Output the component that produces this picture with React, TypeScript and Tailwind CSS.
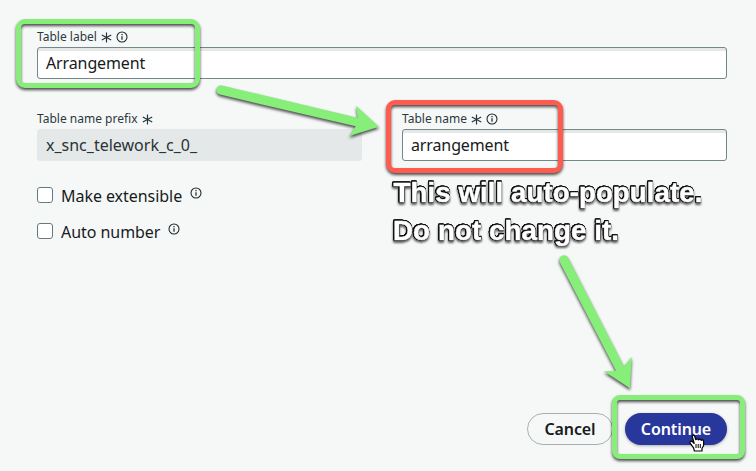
import React from "react";

function Asterisk() {
  return (
    <svg className="h-[11px] w-[11px] shrink-0" viewBox="0 0 11 11" fill="none" stroke="#26343a" strokeWidth="1.15">
      <path d="M5.5 .5v10M.8 3l9.4 5M.8 8l9.4-5" />
    </svg>
  );
}

function Info() {
  return (
    <svg className="h-[12px] w-[12px] shrink-0" viewBox="0 0 12 12" fill="none" stroke="#17242a" strokeWidth="1.05">
      <circle cx="6" cy="6" r="5" />
      <path d="M6 5.2v3.6M6 3v1.2" strokeWidth="1.2" />
    </svg>
  );
}

function Label({ text, info }: { text: string; info?: boolean }) {
  return (
    <div className="flex h-[18px] items-center text-[12px] leading-[18px] text-[#2b393e]">
      <span className="whitespace-nowrap">{text}</span>
      <span className="ml-[4px] flex"><Asterisk /></span>
      {info && <span className="ml-[4.5px] flex"><Info /></span>}
    </div>
  );
}

function Field({ value }: { value: string }) {
  return (
    <div className="mt-px flex h-8 items-center rounded-[3px] border border-[#74878a] bg-white px-2 text-[16px] tracking-[-0.12px] text-[#161b1c] shadow-[inset_0_3px_0_#e4e8e7]">
      {value}
    </div>
  );
}

function Check({ text }: { text: string }) {
  return (
    <div className="flex h-9 items-center text-[16px] leading-6 tracking-[-0.05px] text-[#161b1c]">
      <span className="h-4 w-4 rounded-[3px] border border-[#667a7e] bg-white" />
      <span className="ml-2 pt-px">{text}</span>
      <span className="mb-[5px] ml-[7.5px] flex"><Info /></span>
    </div>
  );
}

const glow = "drop-shadow-[0_2px_1.5px_rgba(0,0,0,0.7)]";

export default function App() {
  return (
    <div className="relative flex h-[471px] w-[756px] flex-col overflow-hidden bg-[#f6f8f8] pt-[28px] pr-[29px] pl-[37px] font-['Noto_Sans',sans-serif]">
      <Label text="Table label" info />
      <Field value="Arrangement" />
      <div className="mt-[31px] grid grid-cols-2 gap-10">
        <div>
          <Label text="Table name prefix" />
          <div className="mt-px flex h-8 items-center rounded-[3px] bg-[#e4e8e9] px-[9px] text-[16px] text-[#2a3234]">x_snc_telework_c_0_</div>
        </div>
        <div>
          <Label text="Table name" info />
          <Field value="arrangement" />
        </div>
      </div>
      <div className="mt-[16px] flex flex-col">
        <Check text="Make extensible" />
        <Check text="Auto number" />
      </div>
      <div className="mt-auto mb-[26px] flex justify-end gap-[12px] text-[16px] font-semibold tracking-[-0.1px]">
        <button className="h-8 w-[86px] rounded-full border border-[#a7b0b1] text-[#161b1c]">Cancel</button>
        <button className="h-8 w-[102px] rounded-full bg-[#27379c] text-white shadow-[0_1px_3px_rgba(0,0,0,0.3)]">Continue</button>
      </div>

      <div className={`absolute top-[19px] left-[16px] h-[69px] w-[184px] rounded-[9px] border-[5px] border-[#86ee79] ${glow}`} />
      <div className={`absolute top-[100px] left-[386px] h-[73px] w-[177px] rounded-[9px] border-[5px] border-[#ff5b4e] ${glow}`} />
      <div className={`absolute top-[395px] left-[612px] h-[64px] w-[133px] rounded-[8px] border-[5px] border-[#86ee79] ${glow}`} />

      <svg className="absolute inset-0" width="756" height="471" viewBox="0 0 756 471">
        <g className={glow} fill="#86ee79">
          <path d="M222 85.4L357.7 117.8L356 105.7L379 126.7L349.3 136L355.7 126.3L220 94.6A4.7 4.7 0 0 1 222 85.4Z" />
          <path d="M568.2 257.8L624 366.5L631.7 356.7L630 388.3L604 371.3L616 370.7L559.8 262.2A4.7 4.7 0 0 1 568.2 257.8Z" />
        </g>
        <g
          className="font-['Liberation_Sans',Arial,sans-serif] text-[28px] font-bold [filter:drop-shadow(0.8px_0_0_#111)_drop-shadow(-0.8px_0_0_#111)_drop-shadow(0_0.8px_0_#111)_drop-shadow(0_-0.8px_0_#111)_drop-shadow(0_2px_1px_rgba(0,0,0,0.65))]"
          fill="white"
          stroke="white"
          strokeWidth="0.5"
        >
          <text x="393.5" y="201.5" textLength="309" lengthAdjust="spacingAndGlyphs">This will auto-populate.</text>
          <text x="393" y="239.5" textLength="226" lengthAdjust="spacingAndGlyphs">Do not change it.</text>
        </g>
        <path transform="translate(689 434)" d="M5.2 9.5L3.4 7.7C1.8 6.3.2 7.8 1.3 9.3L4.6 13.9L5.4 17H13V14.5L14.6 11.5V7.2C14.6 5.6 12.6 5.5 12.2 6.5C12 5 10.1 4.8 9.6 6C9.1 4.6 7.4 4.6 6.8 5.7L5.6 2C5.1.5 3 .9 3.3 2.6Z" fill="white" stroke="black" strokeWidth="1.2" strokeLinejoin="round" />
        <path transform="translate(689 434)" d="M7 10v4M9.2 10v4M11.3 10v4" stroke="black" strokeWidth="1" />
      </svg>
    </div>
  );
}
